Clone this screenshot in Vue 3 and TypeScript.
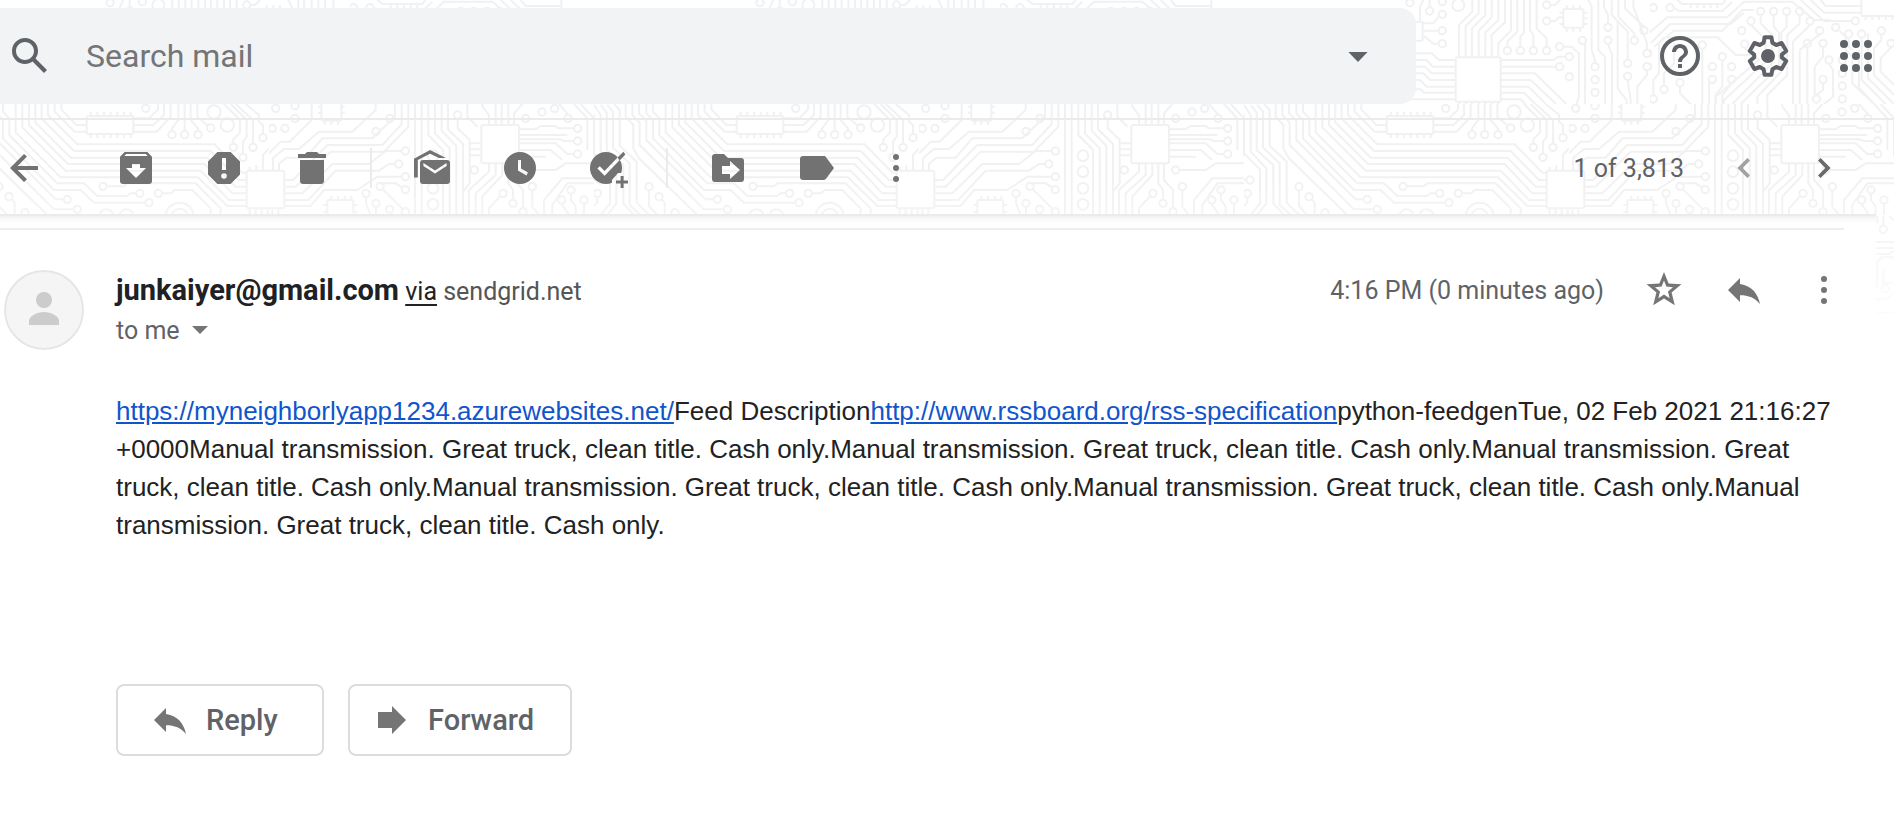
<script setup lang="ts">
import { ref } from 'vue'

const query = ref('')
const position = '1 of 3,813'
const message = {
  from: 'junkaiyer@gmail.com',
  domain: 'sendgrid.net',
  time: '4:16 PM (0 minutes ago)',
  site: 'https://myneighborlyapp1234.azurewebsites.net/',
  spec: 'http://www.rssboard.org/rss-specification',
  stamp: 'python-feedgenTue, 02 Feb 2021 21:16:27 +0000',
  text: 'Manual transmission. Great truck, clean title. Cash only.'.repeat(6),
}

type Dot = [number, number]

const tileOffsets = [-1300, -650, 0, 650]

const topLeftPads: Dot[] = [
  [30, 8], [127, 5], [127, 43], [127, 92], [127, 131], [89, 33], [322, 152], [361, 152], [400, 152], [440, 152],
  [508, 170], [479, 200], [508, 230], [479, 140], [547, 121], [440, 15], [440, 63], [624, 82], [624, 121],
  [585, 200], [585, 239], [585, 277], [703, 121], [683, 190], [683, 229], [732, 92], [741, 160], [741, 200],
]
const topRightPads: Dot[] = [
  [28, 23], [78, 23], [350, 34], [389, 34], [428, 34], [467, 34], [321, 63], [498, 63], [293, 92], [527, 92],
  [575, 82], [634, 63], [11, 160], [11, 200], [205, 200], [205, 238], [263, 200], [263, 238], [60, 268], [28, 297],
  [108, 248], [235, 170], [175, 135], [302, 132], [490, 130], [537, 130], [555, 180], [537, 238], [517, 297],
  [595, 180], [595, 220], [595, 258], [595, 297], [712, 92], [653, 102], [614, 102], [741, 130],
]
const lowLeftPads: Dot[] = [
  [400, 328], [370, 298], [615, 308], [587, 280], [684, 104], [722, 104], [762, 104], [800, 84], [605, 25],
  [868, 142], [927, 142], [897, 172], [957, 113], [477, 259], [643, 280], [165, 260], [195, 290], [243, 338],
  [18, 240], [10, 280],
]
const lowRightPads: Dot[] = [
  [20, 25], [78, 17], [78, 55], [10, 85], [48, 85], [363, 55], [321, 94], [409, 153], [389, 192], [409, 230],
  [409, 269], [291, 280], [321, 310], [333, 259], [362, 328], [409, 335], [566, 45], [702, 280], [732, 310],
  [762, 335], [926, 85], [926, 123], [926, 162], [616, 210], [770, 210], [790, 260], [906, 270], [878, 300],
  [945, 300], [819, 36], [857, 25], [897, 55], [770, 55],
]
</script>

<template>
  <div class="app">
    <svg class="circuit" aria-hidden="true">
      <defs>
        <linearGradient id="fade" x1="0" y1="0" x2="0" y2="1">
          <stop offset="0.5" stop-color="#fff" stop-opacity="0" />
          <stop offset="1" stop-color="#fff" />
        </linearGradient>
      </defs>
      <g v-for="offset in tileOffsets" :key="offset" :transform="`translate(${offset} 0)`">
        <svg x="1400" y="0" width="250" height="104" viewBox="0 0 750 312" class="trace">
          <rect x="167" y="172" width="135" height="133" rx="6" />
          <rect x="20" y="65" width="48" height="57" rx="4" />
          <rect x="490" y="27" width="60" height="56" rx="4" />
          <path d="M177 172V75L217 35V0M197 172V78L236 40V0M216 172V85L256 45V0M236 172V92L275 52V0M256 172V98L295 60V0M275 172V105L315 67V0M295 172V130L333 92V0M322 140V125L352 95V0M361 140V110L372 98V0M400 140V105L390 90V0M440 140V115L410 85V0" />
          <path d="M115 50L100 70H68M68 92H115M115 131H100L72 108M89 21V0M60 65V20L70 0M48 160H95L117 180H167M48 180H80L98 200H167M48 200H75L95 220H167M48 220H70L90 240H167M48 240H60L80 260H167M48 268H62L72 278H167M0 298H167" />
          <path d="M302 180H460L475 170H497M302 200H467M302 220H405L499 312M302 240H392L468 312M302 260H385L437 312M302 278H372L406 312M302 298H362L376 312M491 140H515L537 160V290L529 312M555 131V312M452 15H465L480 0M452 63H465L478 52H490M624 70V45L612 20V0M624 133L636 165V312M565 0L575 20V150L585 180V188M595 0V150L615 170V312" />
          <path d="M703 109V100L655 50V0M683 178V95L635 45V0M683 241L692 300V312M732 80L675 25V0M741 148V130L700 20V0M741 212V225L712 260V312M653 60V265L680 300V312M177 305V312M197 305V312M216 305V312M236 305V312M256 305V312M275 305V312M295 305V312" />
          <path d="M500 27V15M520 27V15M540 27V15M500 83V95M520 83V95M540 83V95M490 38H478M490 72H478M550 38H562M550 55H562M550 72H562" />
          <circle cx="175" cy="15" r="18" />
          <circle v-for="([x, y], i) in topLeftPads" :key="i" :cx="x" :cy="y" r="11" />
        </svg>

        <svg x="1650" y="0" width="244" height="104" viewBox="18 0 732 312" class="trace">
          <rect x="652" y="-20" width="120" height="68" rx="6" />
          <path d="M90 23L105 33H235L265 5M0 112L70 52H250L300 5H445L510 60H560M20 130L78 72H260L300 38M30 140L90 92H235L295 30H330M70 112H220L275 165H320M100 0L115 12H235L245 0M470 0L540 63H622M500 0L540 38H652M530 0L545 18H652" />
          <path d="M350 46V70L385 105V190L265 312M389 46V80L405 98V200L290 312M428 46V80L412 98V215L340 290V312M467 46V70L430 105V225L370 285V312M321 75L365 118V185L240 300V312M498 75L447 125V312M527 104L467 150V312M302 144L345 180L215 290V312M490 142V312M537 142V170L512 200V285M555 192L567 210V290L540 312M537 250V270L517 285" />
          <path d="M175 147V312M195 312V250M235 182V260L215 285V312M263 250L235 285V312M108 260V280L140 312M60 256V220L90 190V130M28 285V240L45 220V130L60 112M11 212V240M587 93L605 110V150L625 170V250L690 312M653 114V240L725 312M672 100V235L750 312M712 104V120L690 145V225L750 285M741 142L710 175V215L750 255M645 150V262L690 312M614 114V140L625 150M180 12V24M200 12V24M220 12V24M140 12V24M160 12V24" />
          <path d="M665 48V60M685 48V60M705 48V60M725 48V60M745 48V60" />
          <circle v-for="([x, y], i) in topRightPads" :key="i" :cx="x" :cy="y" r="11" />
        </svg>

        <svg x="1244" y="104" width="325" height="112" viewBox="0 12 975 336" class="trace">
          <rect x="428" y="48" width="140" height="54" rx="5" />
          <rect x="908" y="212" width="113" height="113" rx="6" />
          <path d="M-18 15L0 45V160L48 208V310L20 345M0 15L20 45V155L67 205V310L40 345M20 15L38 38V150L88 195V310L120 345M40 15L57 35V143L107 190V315L140 345M60 12L77 30V137L128 185V308L165 345" />
          <path d="M95 12V50L118 75V145L135 175L310 345M115 12V45L137 68V135L330 328H388M135 12V40L157 62V120L335 298H358M157 12V40L177 60V115L330 270H410L450 308H603M177 12V35L196 55V105L340 250H420L460 288H548L560 280H575M215 12V97L350 232H762L850 318H908M235 12V82L365 212H770L855 300H908M255 12V75L372 192H782L865 280H908M274 12V67L380 173H790L875 260H908M293 12V56L390 153H800L885 240H908M312 12V45L400 133H812L895 218H908" />
          <path d="M332 12V35L392 95H428M352 12V28L397 75H428M568 75H628L660 45V12M568 95H638L680 50V12M568 55H615L642 28V12M703 12V60L684 85V92M722 12V92M740 12V60L762 85V92M760 12V50L792 78M868 130V118L888 98V60L840 12M927 130V60L875 12M897 160V125L908 110V60L860 12M957 101V75L945 65V45L905 12M489 259H540L550 250H755L830 325V345M655 280H682L692 270H745L800 325V345M165 272V318L190 345M203 298L212 308V345M6 240H0M10 292V308L0 318" />
          <path d="M440 48V36M460 48V36M480 48V36M500 48V36M520 48V36M540 48V36M560 48V36M440 102V114M460 102V114M480 102V114M500 102V114M520 102V114M540 102V114M560 102V114M917 212V200M937 212V195M957 212V165L975 145M917 325V348M935 325V348M953 325V348M971 325V348" />
          <circle cx="810" cy="36" r="20" /><circle cx="850" cy="75" r="20" />
          <circle cx="487" cy="350" r="22" /><circle cx="547" cy="350" r="22" />
          <circle cx="707" cy="350" r="24" /><circle cx="707" cy="350" r="42" />
          <circle v-for="([x, y], i) in lowLeftPads" :key="i" :cx="x" :cy="y" r="11" />
        </svg>

        <svg x="1569" y="104" width="325" height="112" viewBox="0 12 975 336" class="trace">
          <rect x="-67" y="212" width="113" height="113" rx="6" />
          <rect x="157" y="8" width="60" height="54" rx="4" />
          <rect x="175" y="300" width="78" height="60" rx="4" />
          <rect x="637" y="75" width="113" height="115" rx="6" />
          <path d="M0 160L35 125H62L128 60V12M12 212V175L45 147H90L150 95H250L320 30V12M30 212V192L52 173H110L160 115H310L378 50V12M46 240H72L175 135H340L398 72V12M46 260H80L185 155H345L418 80V12M46 280H100L190 192H300L350 153H398M46 300H118L200 212H330L360 192H377M46 318H125L165 270H265L325 230H398M398 262L380 250H330M342 268L402 328M291 292V310L305 345M321 322V345M438 12V345M458 12V345" />
          <path d="M478 12V105L522 150V345M498 12V100L542 145V345M518 12V92L562 138V345M537 12V88L582 132V345M566 57V85L602 120V250L582 275M595 12V50L625 80M660 75V45L640 20V12M680 75V12M698 75V12M718 75V12M735 75V40L760 12M605 130H637M605 148H637M605 166H637" />
          <path d="M660 190V215L600 270V345M680 190V225L620 280V345M700 190V225L640 290V345M694 288L660 325V345M718 190V250L732 270V298M735 190V240L762 270V323M750 88H800L815 78H860L868 85H914M750 105H895M750 130H860L895 162H914M750 150H845L880 180M750 118H870L885 123H914M750 170H830M782 210H860L890 190H975M790 272V320L810 345M825 345V300L880 235H975M850 345V315L895 250H975M878 312L900 345M906 282V300L920 320V345M945 312V345M915 12L955 55V150M935 12L975 55V170M897 43L870 12" />
          <path d="M167 62V74M187 62V74M207 62V74M157 20H147M157 38H147M217 20H227M217 38H227M187 300V288M207 300V288M227 300V288M247 300V288M175 315H163M175 335H163M253 315H265M253 335H265M10 325V348M28 325V348" />
          <circle v-for="y in [167, 215, 265, 313]" :key="y" cx="492" :cy="y" r="16" />
          <circle v-for="([x, y], i) in lowRightPads" :key="i" :cx="x" :cy="y" r="11" />
        </svg>

        <svg x="1876" y="216" width="18" height="130" viewBox="0 0 54 390" class="trace">
          <path d="M4 0V22M22 0V28M40 0L54 14M0 78H54M0 96H54M0 114H40L54 104M4 215V140L16 124H54M22 160V200H54M0 250H30L54 230M0 290H54" />
          <circle cx="22" cy="40" r="11" /><circle cx="28" cy="218" r="11" />
        </svg>
      </g>
      <rect width="100%" height="100%" fill="url(#fade)" />
    </svg>

    <header class="header">
      <form class="search" role="search" @submit.prevent>
        <button class="icon-btn" type="submit" aria-label="Search">
          <svg width="48" height="48" viewBox="0 0 24 24"><path d="M20.49 19l-5.73-5.73C15.53 12.2 16 10.91 16 9.5A6.5 6.5 0 1 0 9.5 16c1.41 0 2.7-.47 3.77-1.24L19 20.49 20.49 19zM5 9.5C5 7.01 7.01 5 9.5 5S14 7.01 14 9.5 11.99 14 9.5 14 5 11.99 5 9.5z" /></svg>
        </button>
        <input v-model="query" class="search-input" type="text" placeholder="Search mail" aria-label="Search mail" />
        <button class="icon-btn" type="button" aria-label="Show search options">
          <svg width="48" height="48" viewBox="0 0 24 24"><path d="M7.2 10l4.8 5 4.8-5z" /></svg>
        </button>
      </form>
      <nav class="header-actions">
        <button class="icon-btn" type="button" aria-label="Support">
          <svg width="48" height="48" viewBox="0 0 24 24">
            <circle cx="12" cy="12" r="9" class="outline" />
            <path d="M11 16h2v2h-2zM12 6c-2.210 0-4 1.790-4 4h2c0-1.100.9-2 2-2s2 .9 2 2c0 2-3 1.750-3 5h2c0-2.250 3-2.500 3-5 0-2.210-1.790-4-4-4z" />
          </svg>
        </button>
        <button class="icon-btn" type="button" aria-label="Settings">
          <svg width="48" height="48" viewBox="0 0 24 24">
            <path d="M10.300 2.600h3.400l.5 2.800 1.900 1.100 2.700-1 1.700 2.900 .6 1.100-2.200 1.800v1.400l2.200 1.800-2.300 4-2.700-1-1.900 1.100-.5 2.800h-3.400l-.5-2.800-1.900-1.100-2.700 1-2.300-4 2.200-1.800v-1.400L2.900 9.500l2.300-4 2.700 1 1.900-1.100z" class="outline" />
            <circle cx="12" cy="12" r="3.500" />
          </svg>
        </button>
        <button class="icon-btn" type="button" aria-label="Google apps">
          <svg width="48" height="48" viewBox="0 0 24 24"><template v-for="y in [6, 12, 18]" :key="y"><circle v-for="x in [6, 12, 18]" :key="x" :cx="x" :cy="y" r="2" /></template></svg>
        </button>
      </nav>
    </header>

    <main class="main">
      <div class="toolbar" role="toolbar" aria-label="Message actions">
        <button class="icon-btn" type="button" aria-label="Back to Inbox">
          <svg width="40" height="40" viewBox="0 0 20 20"><path d="M17 9H6.800l4.700-4.700L10 3 3 10l7 7 1.500-1.400L6.800 11H17z" /></svg>
        </button>
        <div class="group first">
          <button class="icon-btn" type="button" aria-label="Archive">
            <svg width="40" height="40" viewBox="0 0 20 20"><path fill-rule="evenodd" d="M4.300 2h11.400L18 4.400V16.400A1.600 1.600 0 0 1 16.400 18H3.600A1.600 1.600 0 0 1 2 16.400V4.400zM4.200 4h11.600l-.9-1H5.100zM8 8v2H5l5 5 5-5h-3V8z" /></svg>
          </button>
          <button class="icon-btn" type="button" aria-label="Report spam">
            <svg width="40" height="40" viewBox="0 0 20 20"><path fill-rule="evenodd" d="M6.700 2h6.600L18 6.700v6.600L13.300 18H6.700L2 13.300V6.700zM9 5v6h2V5zM10 12.600a1.400 1.400 0 1 0 0 2.800 1.400 1.400 0 0 0 0-2.800z" /></svg>
          </button>
          <button class="icon-btn" type="button" aria-label="Delete">
            <svg width="40" height="40" viewBox="0 0 20 20"><path d="M7.500 2h5l1 1H17v2H3V3h3.500zM4 6h12v10.400a1.600 1.600 0 0 1-1.600 1.600H5.600A1.600 1.600 0 0 1 4 16.400z" /></svg>
          </button>
        </div>
        <span class="divider"></span>
        <div class="group">
          <button class="icon-btn" type="button" aria-label="Mark as unread">
            <svg width="40" height="40" viewBox="0 0 20 20">
              <path fill-rule="evenodd" d="M5.500 6h12A1.500 1.500 0 0 1 19 7.500v9a1.500 1.500 0 0 1-1.500 1.500h-12A1.500 1.500 0 0 1 4 16.500v-9A1.500 1.500 0 0 1 5.500 6zM5.700 7.500v1.500l5.800 3.800 5.800-3.800V7.500l-5.800 3.700z" />
              <path d="M1 14.800V5.400L9 1l8 4h-3.500L9 2.900 2.900 6v8.800z" />
            </svg>
          </button>
          <button class="icon-btn" type="button" aria-label="Snooze">
            <svg width="40" height="40" viewBox="0 0 20 20"><path fill-rule="evenodd" d="M10 2a8 8 0 1 0 0 16 8 8 0 0 0 0-16zM9 6h1.500v4.300l3.500 2-.8 1.400L9 11.200z" /></svg>
          </button>
          <button class="icon-btn" type="button" aria-label="Add to Tasks">
            <svg width="40" height="40" viewBox="0 0 20 20">
              <mask id="task-cut">
                <rect width="20" height="20" fill="#fff" />
                <path d="M5.300 9.700l3 3L17.300 3.300" fill="none" stroke="#000" stroke-width="1.700" />
                <path d="M12 20v-4l3-3.500h5V20z" fill="#000" />
              </mask>
              <circle cx="9" cy="10" r="8" mask="url(#task-cut)" />
              <path d="M14.800 4.800L17.700 1.900l1 1.300-2.900 3zM16.300 14h1.500v2.300H20v1.500h-2.200V20h-1.500v-2.200H14v-1.500h2.300z" />
            </svg>
          </button>
        </div>
        <span class="divider"></span>
        <div class="group">
          <button class="icon-btn" type="button" aria-label="Move to">
            <svg width="40" height="40" viewBox="0 0 20 20"><path fill-rule="evenodd" d="M3.500 3H8l2 2h6.500A1.500 1.500 0 0 1 18 6.500v9a1.500 1.500 0 0 1-1.500 1.500h-13A1.500 1.500 0 0 1 2 15.500v-11A1.500 1.500 0 0 1 3.500 3zM7 9v4h4v2.500l5-4.500-5-4.500V9z" /></svg>
          </button>
          <button class="icon-btn" type="button" aria-label="Labels">
            <svg width="40" height="40" viewBox="0 0 20 20"><path d="M3.600 4h10.200c.6 0 1 .2 1.300.7L19 10l-3.900 5.300c-.3.500-.7.7-1.300.7H3.600A1.600 1.600 0 0 1 2 14.400V5.600A1.600 1.600 0 0 1 3.600 4z" /></svg>
          </button>
        </div>
        <button class="icon-btn more" type="button" aria-label="More">
          <svg width="40" height="40" viewBox="0 0 20 20"><circle v-for="y in [4.5, 10, 15.5]" :key="y" cx="10" :cy="y" r="1.500" /></svg>
        </button>
        <div class="pager">
          <span>{{ position }}</span>
          <button class="icon-btn newer" type="button" aria-label="Newer">
            <svg width="40" height="40" viewBox="0 0 20 20"><path d="M11.700 5L13 6.300 9.400 10l3.600 3.700-1.300 1.300-5-5z" /></svg>
          </button>
          <button class="icon-btn" type="button" aria-label="Older">
            <svg width="40" height="40" viewBox="0 0 20 20"><path d="M8.300 5L7 6.300l3.600 3.700L7 13.700 8.300 15l5-5z" /></svg>
          </button>
        </div>
      </div>

      <article class="card">
        <hr class="rule" />
        <div class="message">
          <svg class="avatar" viewBox="0 0 80 80" role="img" aria-label="Sender photo">
            <circle cx="40" cy="40" r="39" class="disc" />
            <circle cx="40" cy="30" r="8" /><path d="M25 55v-4c0-5 8-9 15-9s15 4 15 9v4z" />
          </svg>
          <div class="content">
            <div class="sender">
              <h3 class="who"><span class="name">{{ message.from }}</span> <a class="via" href="#via">via</a> <span class="domain">{{ message.domain }}</span></h3>
              <div class="meta">
                <time>{{ message.time }}</time>
                <button class="icon-btn" type="button" aria-label="Star">
                  <svg width="40" height="40" viewBox="0 0 20 20"><path fill-rule="evenodd" d="M10 1l2.300 5.700 6.400.4-4.900 4.200 1.600 6.300-5.400-3.400-5.400 3.400 1.600-6.300-4.900-4.200 6.400-.4zM10 5.200L8.800 8.300l-3.300.3 2.500 2.200-.8 3.300L10 12.300l2.800 1.800-.8-3.300 2.500-2.200-3.300-.3z" /></svg>
                </button>
                <button class="icon-btn" type="button" aria-label="Reply">
                  <svg width="40" height="40" viewBox="0 0 20 20"><path d="M8 7V4l-6 6 6 6v-3.400c4.300 0 7.500 1.300 10 4.400C17 12 14 7.800 8 7z" /></svg>
                </button>
                <button class="icon-btn" type="button" aria-label="More message options">
                  <svg width="40" height="40" viewBox="0 0 20 20"><circle v-for="y in [4.5, 10, 15.5]" :key="y" cx="10" :cy="y" r="1.500" /></svg>
                </button>
              </div>
            </div>
            <button class="recipients" type="button">
              to me
              <svg width="16" height="8" viewBox="0 0 16 8" aria-hidden="true"><path d="M0 0h16L8 8z" /></svg>
            </button>
            <p class="body"><a :href="message.site">{{ message.site }}</a>Feed Description<a :href="message.spec">{{ message.spec }}</a>{{ message.stamp }}{{ message.text }}</p>
            <div class="answers">
              <button class="answer" type="button">
                <svg width="40" height="40" viewBox="0 0 20 20"><path d="M8 7V4l-6 6 6 6v-3.400c4.300 0 7.500 1.300 10 4.400C17 12 14 7.800 8 7z" /></svg>
                Reply
              </button>
              <button class="answer forward" type="button">
                <svg width="40" height="40" viewBox="0 0 20 20"><path d="M10 6V3l7 7-7 7v-3H3V6z" /></svg>
                Forward
              </button>
            </div>
          </div>
        </div>
      </article>
    </main>
  </div>
</template>

<style>
body {
  margin: 0;
  background: #fff;
}
</style>

<style scoped>
.app {
  position: relative;
  display: flex;
  flex-direction: column;
  min-height: 100vh;
  font-family: Roboto, "Liberation Sans", sans-serif;
  color: #5f6368;
}

.circuit {
  position: absolute;
  top: 0;
  left: 0;
  width: 100%;
  height: 350px;
}

.trace {
  fill: none;
  stroke: #f1f1f1;
  stroke-width: 6;
}

.header,
.main {
  position: relative;
}

.header {
  display: flex;
  justify-content: space-between;
  align-items: center;
  padding: 8px 14px 14px 0;
  border-bottom: 2px solid #e8ecef;
}

.search {
  box-sizing: border-box;
  display: flex;
  align-items: center;
  flex: 0 0 1416px;
  height: 96px;
  padding: 0 34px 0 6px;
  border-radius: 0 16px 16px 0;
  background: #f1f3f4;
}

.search-input {
  flex: 1;
  min-width: 0;
  height: 56px;
  margin-left: 32px;
  padding: 0;
  border: 0;
  outline: 0;
  background: none;
  font: 400 32px Roboto, sans-serif;
  color: #202124;
}

.search-input::placeholder {
  color: #737577;
  opacity: 1;
}

.icon-btn {
  display: flex;
  padding: 0;
  border: 0;
  background: none;
  fill: currentColor;
  color: inherit;
  cursor: pointer;
}

.outline {
  fill: none;
  stroke: currentColor;
  stroke-width: 2;
  stroke-linejoin: round;
}

.header-actions {
  display: flex;
  gap: 40px;
}

.main {
  flex: 1;
  display: flex;
  flex-direction: column;
  margin-right: 18px;
}

.toolbar {
  box-sizing: border-box;
  display: flex;
  align-items: center;
  height: 96px;
  padding: 2px 32px 0 4px;
  border-bottom: 2px solid #e8ecef;
  color: #727272;
}

.group {
  display: flex;
  gap: 48px;
}

.group.first {
  margin-left: 72px;
}

.divider {
  width: 2px;
  height: 40px;
  margin: 0 40px 0 38px;
  background: #e8ecef;
}

.more {
  margin-left: 40px;
}

.pager {
  display: flex;
  align-items: center;
  gap: 40px;
  margin-left: auto;
  font-size: 25px;
  color: #5f6368;
}

.pager .icon-btn {
  color: #6a6a6a;
}

.pager .newer {
  color: #a2a2a2;
}

.card {
  flex: 1;
  padding: 12px 32px 80px 0;
  background: #fff;
  box-shadow: inset 0 6px 6px -5px #e6e6e6;
}

.rule {
  height: 2px;
  margin: 0;
  border: 0;
  background: #eceff1;
}

.message {
  display: flex;
  align-items: flex-start;
  padding: 40px 0 0 4px;
}

.avatar {
  flex: none;
  width: 80px;
  height: 80px;
  fill: #ccc;
}

.disc {
  fill: #f5f5f5;
  stroke: #e6e6e6;
  stroke-width: 2;
}

.content {
  flex: 1;
  min-width: 0;
  margin-left: 32px;
}

.sender {
  display: flex;
  justify-content: space-between;
  align-items: center;
  height: 40px;
}

.who {
  margin: 0;
  font-size: 25px;
  font-weight: 400;
  color: #555;
}

.name {
  font-size: 29px;
  font-weight: 700;
  color: #202124;
}

.via {
  color: #222;
  text-underline-offset: 4px;
}

.meta {
  display: flex;
  align-items: center;
  gap: 40px;
  font-size: 25px;
}

.meta .icon-btn {
  color: #757575;
}

.recipients {
  display: flex;
  align-items: center;
  gap: 12px;
  height: 40px;
  padding: 0;
  border: 0;
  background: none;
  font: 400 25px Roboto, sans-serif;
  color: #5f6368;
  fill: #757575;
}

.body {
  margin: 42px 0 0;
  font: 400 26px/38px "Liberation Sans", Arial, sans-serif;
  color: #222;
}

.body a {
  color: #15c;
}

.answers {
  display: flex;
  gap: 24px;
  margin-top: 140px;
}

.answer {
  box-sizing: border-box;
  display: flex;
  align-items: center;
  gap: 16px;
  width: 208px;
  height: 72px;
  padding: 0 0 0 32px;
  border: 2px solid #dadce0;
  border-radius: 8px;
  background: #fff;
  font: 500 29px Roboto, sans-serif;
  color: #5f6368;
  fill: #757575;
}

.answer.forward {
  width: 224px;
  padding-left: 22px;
}
</style>
